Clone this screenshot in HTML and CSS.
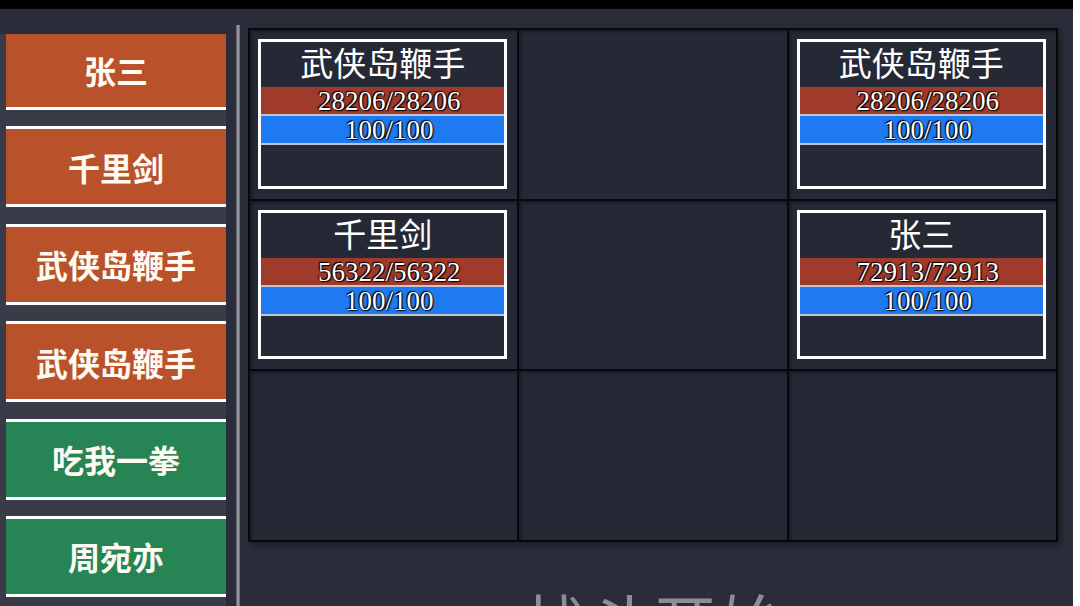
FILE: index.html
```html
<!DOCTYPE html>
<html lang="zh">
<head>
<meta charset="utf-8">
<title>战斗</title>
<link rel="stylesheet" href="styles.css">
</head>
<body>
<div class="app">
  <div class="topbar"></div>
  <div class="main">
    <aside class="sidebar">
      <div class="list">
        <div class="btn enemy">张三</div>
        <div class="btn enemy">千里剑</div>
        <div class="btn enemy">武侠岛鞭手</div>
        <div class="btn enemy">武侠岛鞭手</div>
        <div class="btn ally">吃我一拳</div>
        <div class="btn ally">周宛亦</div>
      </div>
    </aside>
    <div class="divider"></div>
    <section class="stage">
      <div class="grid">
        <div class="cell">
          <div class="card">
            <div class="name">武侠岛鞭手</div>
            <div class="bar hp">28206/28206</div>
            <div class="bar mp">100/100</div>
          </div>
        </div>
        <div class="cell"></div>
        <div class="cell">
          <div class="card">
            <div class="name">武侠岛鞭手</div>
            <div class="bar hp">28206/28206</div>
            <div class="bar mp">100/100</div>
          </div>
        </div>
        <div class="cell">
          <div class="card">
            <div class="name">千里剑</div>
            <div class="bar hp">56322/56322</div>
            <div class="bar mp">100/100</div>
          </div>
        </div>
        <div class="cell"></div>
        <div class="cell">
          <div class="card">
            <div class="name">张三</div>
            <div class="bar hp">72913/72913</div>
            <div class="bar mp">100/100</div>
          </div>
        </div>
        <div class="cell"></div>
        <div class="cell"></div>
        <div class="cell"></div>
      </div>
      <div class="caption">战斗开始</div>
    </section>
  </div>
</div>
</body>
</html>
```
FILE: styles.css
```css
html, body {
  margin: 0;
  padding: 0;
  background: #ffffff;
}

.app {
  width: 1073px;
  height: 606px;
  background: #2a2d39;
  display: flex;
  flex-direction: column;
  overflow: hidden;
  font-family: "Noto Sans CJK SC", "Noto Sans", sans-serif;
}

.topbar {
  height: 9px;
  flex: none;
  background: #000000;
}

.main {
  flex: 1;
  display: flex;
  min-height: 0;
}

.sidebar {
  width: 226px;
  flex: none;
  margin-top: 25px;
  background: #393c48;
  overflow: hidden;
}

.list {
  margin-top: -5px;
  padding-left: 6px;
  display: flex;
  flex-direction: column;
  gap: 16.4px;
}

.btn {
  height: 75px;
  flex: none;
  border-top: 3px solid #ffffff;
  border-bottom: 3px solid #ffffff;
  display: flex;
  align-items: center;
  justify-content: center;
  color: #fffaf2;
  font-size: 32px;
  font-weight: bold;
  line-height: 1;
}

.enemy {
  background: #b9522a;
}

.ally {
  background: #268455;
}

.divider {
  width: 4px;
  flex: none;
  margin: 16px 0 0 10px;
  background: linear-gradient(90deg, #50535e, #a8aab2 50%, #5b5e69);
}

.stage {
  flex: 1;
  margin: 19px 0 0 8px;
  display: flex;
  flex-direction: column;
  min-width: 0;
}

.grid {
  width: 810px;
  height: 514px;
  flex: none;
  box-sizing: border-box;
  padding: 2px;
  gap: 2px;
  display: grid;
  grid-template-columns: repeat(3, 1fr);
  grid-template-rows: repeat(3, 1fr);
  background: #07080c;
  box-shadow: 3px 3px 6px rgba(0, 0, 0, 0.35);
}

.cell {
  background: #252936;
  box-shadow: inset 2px 2px 3px rgba(0, 0, 0, 0.35);
  padding: 9px 10px 10px 8px;
  min-height: 0;
  display: flex;
}

.card {
  flex: 1;
  border: 3px solid #ffffff;
  background: #252936;
  display: flex;
  flex-direction: column;
}

.name {
  height: 40px;
  padding-bottom: 5px;
  line-height: 40px;
  text-align: center;
  color: #ffffff;
  font-size: 33px;
  font-weight: normal;
}

.bar {
  height: 27px;
  line-height: 28px;
  padding-left: 13px;
  border-bottom: 2px solid #c2c5ce;
  text-align: center;
  color: #ffffff;
  font-family: "Liberation Serif", "Times New Roman", serif;
  font-size: 27px;
  text-shadow: 0 0 2px #000, 1px 1px 1px #000, -1px -1px 1px #000;
}

.hp {
  background: #a03a2a;
}

.mp {
  background: #1e7af0;
}

.caption {
  width: 810px;
  margin-top: 46px;
  text-align: center;
  line-height: 64px;
  font-size: 64px;
  font-weight: normal;
  color: #8b8e99;
  letter-spacing: 2px;
}
```
